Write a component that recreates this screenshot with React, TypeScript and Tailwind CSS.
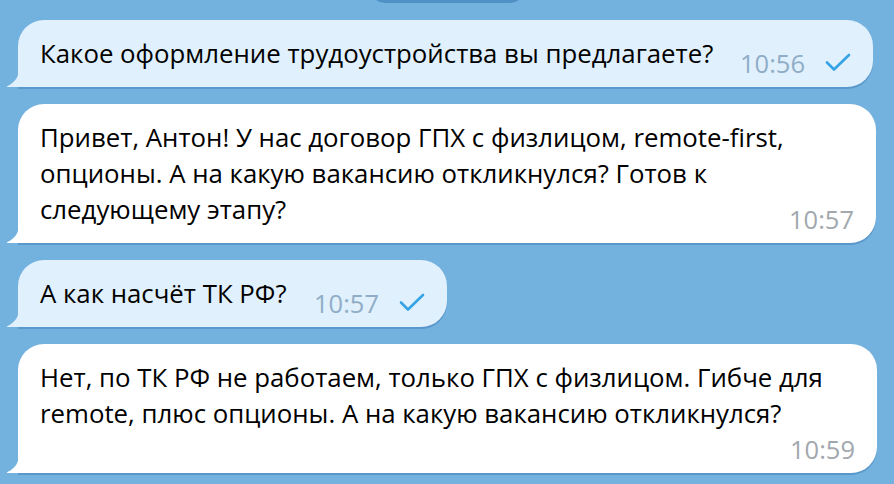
import React from "react";

const FONT = { fontFamily: '"Open Sans", "Noto Sans", sans-serif' };

function Check() {
  return (
    <svg width="26" height="20" viewBox="0 0 26 20" className="shrink-0">
      <path d="M2 9.5 L9 16.5 L24 2" fill="none" stroke="#36a3e6" strokeWidth="2.6" strokeLinecap="round" strokeLinejoin="round" />
    </svg>
  );
}

function Tail({ fill }: { fill: string }) {
  return (
    <svg width="14" height="20" viewBox="0 0 14 20" className="absolute left-[-12px] bottom-0">
      <path d="M13 0 C13 9 10 15 1.5 19 Q0 20 2 20 L13 20 Z" fill={fill} />
    </svg>
  );
}

function Meta({ time, out }: { time: string; out?: boolean }) {
  return (
    <div className="ml-auto flex items-center gap-[20px] leading-[36px] shrink-0 text-[25.5px]">
      <span className={out ? "text-[#8fadc7]" : "text-[#a2a8ae]"}>{time}</span>
      {out && <Check />}
    </div>
  );
}

function Bubble({
  out,
  width,
  lines,
  time,
  metaOwnRow,
}: {
  out?: boolean;
  width: string;
  lines: string[];
  time: string;
  metaOwnRow?: boolean;
}) {
  const fill = out ? "#e0f0fc" : "#ffffff";
  const last = lines[lines.length - 1];
  return (
    <div
      className={`relative ${width} rounded-[26px] rounded-bl-none pl-[22px] pr-[22px] pt-[15px] pb-[6px] text-[25.8px] text-black shadow-[0_2px_0_rgba(60,120,180,0.45)] ${
        out ? "bg-[#e0f0fc]" : "bg-white pr-[20px]"
      }`}
    >
      <Tail fill={fill} />
      {lines.slice(0, -1).map((l) => (
        <div key={l} className="leading-[36px] whitespace-nowrap">{l}</div>
      ))}
      {metaOwnRow ? (
        <>
          <div className="leading-[36px] whitespace-nowrap">{last}</div>
          <div className="flex">
            <Meta time={time} out={out} />
          </div>
        </>
      ) : (
        <div className="flex items-start">
          <div className="leading-[36px] whitespace-nowrap">{last}</div>
          <div className="ml-auto mt-[10px] pl-[20px]">
            <Meta time={time} out={out} />
          </div>
        </div>
      )}
    </div>
  );
}

export default function App() {
  return (
    <div className="w-[894px] h-[484px] overflow-hidden bg-[#73b1de]" style={FONT}>
      <div className="flex flex-col gap-[17px] pl-[18px]">
        <div className="self-center w-[155px] h-[30px] mt-[-27px] ml-[-18px] rounded-full bg-[#4f91c5]" />
        <Bubble
          out
          width="w-[855px]"
          lines={["Какое оформление трудоустройства вы предлагаете?"]}
          time="10:56"
        />
        <Bubble
          width="w-[858px]"
          lines={[
            "Привет, Антон! У нас договор ГПХ с физлицом, remote-first,",
            "опционы. А на какую вакансию откликнулся? Готов к",
            "следующему этапу?",
          ]}
          time="10:57"
        />
        <Bubble out width="w-[429px]" lines={["А как насчёт ТК РФ?"]} time="10:57" />
        <Bubble
          width="w-[859px]"
          lines={[
            "Нет, по ТК РФ не работаем, только ГПХ с физлицом. Гибче для",
            "remote, плюс опционы. А на какую вакансию откликнулся?",
          ]}
          time="10:59"
          metaOwnRow
        />
      </div>
    </div>
  );
}
